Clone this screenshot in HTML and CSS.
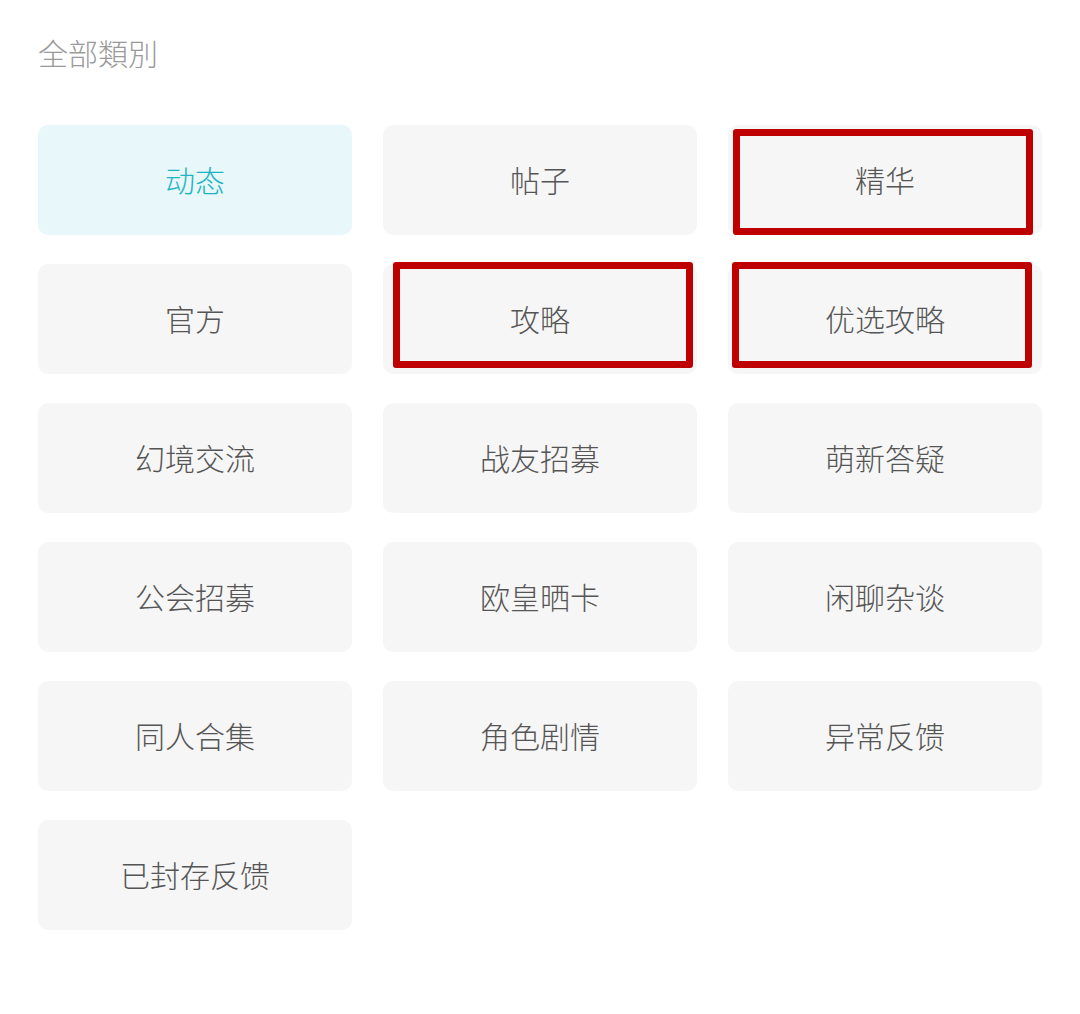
FILE: index.html
```html
<!DOCTYPE html>
<html lang="zh-CN">
<head>
<meta charset="utf-8">
<link rel="stylesheet" href="styles.css">
</head>
<body>
<div class="page">
  <div class="title">全部類別</div>
  <div class="grid">
    <div class="cell active">动态</div>
    <div class="cell">帖子</div>
    <div class="cell">精华<span class="mark mark-a"></span></div>
    <div class="cell">官方</div>
    <div class="cell">攻略<span class="mark mark-b"></span></div>
    <div class="cell">优选攻略<span class="mark mark-c"></span></div>
    <div class="cell">幻境交流</div>
    <div class="cell">战友招募</div>
    <div class="cell">萌新答疑</div>
    <div class="cell">公会招募</div>
    <div class="cell">欧皇晒卡</div>
    <div class="cell">闲聊杂谈</div>
    <div class="cell">同人合集</div>
    <div class="cell">角色剧情</div>
    <div class="cell">异常反馈</div>
    <div class="cell">已封存反馈</div>
  </div>
</div>
</body>
</html>
```
FILE: styles.css
```css
html, body {
  margin: 0;
  padding: 0;
  background: #ffffff;
}
body {
  font-family: "Noto Sans CJK SC", "Noto Sans", sans-serif;
  font-weight: 300;
}
.page {
  padding: 34px 38px 0 38px;
}
.title {
  font-size: 30px;
  line-height: 36px;
  color: #9a9a9a;
  height: 36px;
}
.grid {
  margin-top: 55px;
  display: grid;
  grid-template-columns: repeat(3, 314px);
  grid-auto-rows: 110px;
  column-gap: 31px;
  row-gap: 29px;
}
.cell {
  position: relative;
  box-sizing: border-box;
  padding-bottom: 3px;
  background: #f6f6f6;
  border-radius: 10px;
  display: flex;
  align-items: center;
  justify-content: center;
  font-size: 30px;
  color: #555555;
}
.cell.active {
  background: #e8f7fa;
  color: #1db5c3;
}
.mark {
  position: absolute;
  width: 300px;
  height: 106px;
  box-sizing: border-box;
  border: 7px solid #bf0000;
  border-radius: 3px;
}
.mark-a { left: 5px; top: 4px; }
.mark-b { left: 10px; top: -2px; }
.mark-c { left: 4px; top: -2px; }
```
